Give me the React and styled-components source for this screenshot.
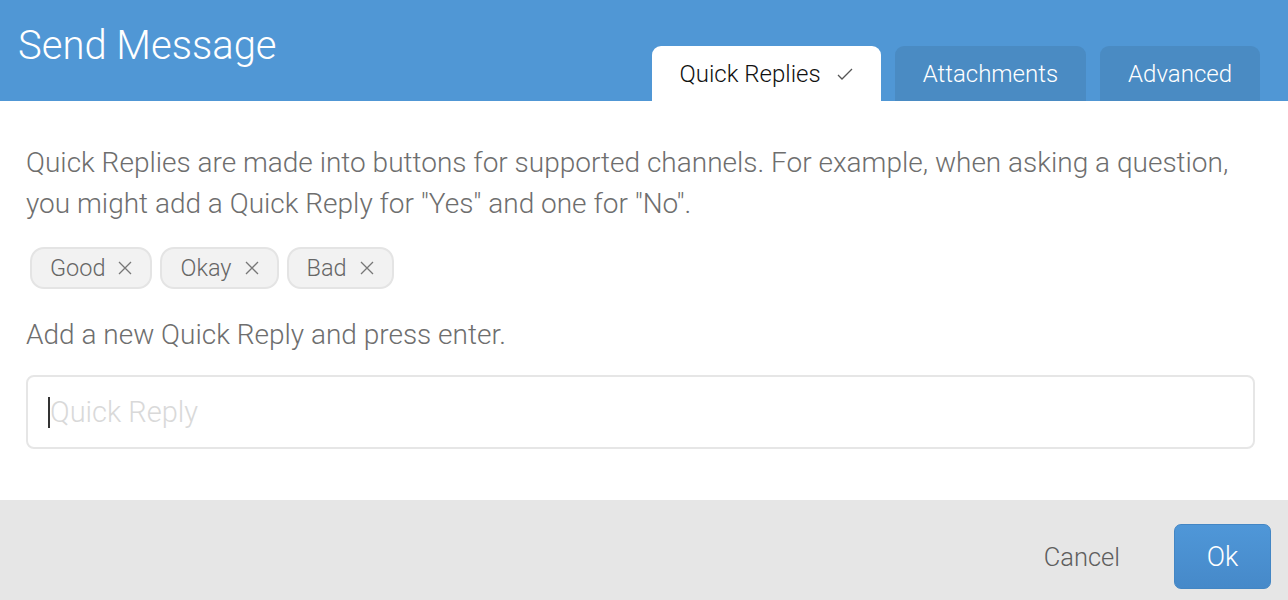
import React, { useState } from "react";
import styled, { createGlobalStyle } from "styled-components";

const GlobalStyle = createGlobalStyle`
  html, body {
    margin: 0;
    padding: 0;
    background: #fff;
    font-family: Roboto, "Liberation Sans", sans-serif;
  }
  * { box-sizing: border-box; }
`;

const Modal = styled.div`
  width: 1288px;
  height: 600px;
  display: flex;
  flex-direction: column;
  overflow: hidden;
`;

const Header = styled.div`
  height: 101px;
  background: #5097d5;
  display: flex;
  justify-content: space-between;
  align-items: flex-end;
  padding: 0 28px 0 18px;
`;

const Title = styled.h1`
  align-self: flex-start;
  margin: 23px 0 0;
  font-size: 40px;
  font-weight: 300;
  color: #fff;
  line-height: 46px;
`;

const Tabs = styled.div`
  display: flex;
  gap: 14px;
`;

const Tab = styled.div`
  height: 55px;
  display: flex;
  align-items: center;
  gap: 16px;
  padding: 1px 28px 0;
  border-radius: 9px 9px 0 0;
  font-size: 24px;
  font-weight: 300;
  background: ${(p) => (p.active ? "#fff" : "#4a8bc3")};
  color: ${(p) => (p.active ? "#111" : "#fff")};
  cursor: pointer;
`;

const Body = styled.div`
  flex: 1;
  padding: 41px 30px 0 26px;
`;

const Text = styled.p`
  margin: 0;
  font-size: 28px;
  font-weight: 300;
  line-height: 41px;
  color: #6e6e6e;
`;

const Chips = styled.div`
  display: flex;
  gap: 8px;
  margin: 23px 0 25px 4px;
`;

const Chip = styled.span`
  height: 42px;
  display: inline-flex;
  align-items: center;
  gap: 13px;
  padding: 0 18px;
  border: 2px solid #e4e4e4;
  border-radius: 14px;
  background: #f2f2f2;
  color: #666;
  font-size: 23.5px;
  font-weight: 300;
`;

const Field = styled.div`
  position: relative;
  margin-top: 20px;
`;

const Input = styled.input`
  display: block;
  width: 1229px;
  height: 74px;
  padding: 0 22px;
  border: 2px solid #e6e6e6;
  border-radius: 8px;
  font-family: Roboto, "Liberation Sans", sans-serif;
  font-size: 29px;
  font-weight: 300;
  color: #444;
  caret-color: transparent;
  outline: none;
  &::placeholder { color: #d9d9d9; }
`;

const Caret = styled.span`
  position: absolute;
  left: 22px;
  top: 22px;
  width: 2px;
  height: 31px;
  background: #333;
`;

const Footer = styled.div`
  height: 100px;
  background: #e6e6e6;
  display: flex;
  justify-content: flex-end;
  align-items: flex-start;
  padding: 24px 17px 0 0;
  gap: 54px;
`;

const Cancel = styled.button`
  height: 65px;
  border: none;
  background: none;
  padding: 0;
  font-family: inherit;
  font-size: 25.5px;
  font-weight: 300;
  color: #5e5e5e;
`;

const Ok = styled.button`
  width: 97px;
  height: 65px;
  border: 1px solid #4386c4;
  border-radius: 7px;
  background: linear-gradient(#4f97d8, #4689c9);
  font-family: inherit;
  font-size: 27px;
  font-weight: 300;
  color: #fff;
`;

const Check = () => (
  <svg width="16" height="14" viewBox="0 0 16 14">
    <path d="M1 8 L5 12 L15 2" fill="none" stroke="#555" strokeWidth="1.3" />
  </svg>
);

const Close = () => (
  <svg width="14" height="14" viewBox="0 0 14 14">
    <path d="M1 1 L13 13 M13 1 L1 13" fill="none" stroke="#777" strokeWidth="1.3" />
  </svg>
);

export default function App() {
  const [replies] = useState(["Good", "Okay", "Bad"]);
  return (
    <Modal>
      <GlobalStyle />
      <Header>
        <Title>Send Message</Title>
        <Tabs>
          <Tab active>
            Quick Replies <Check />
          </Tab>
          <Tab>Attachments</Tab>
          <Tab>Advanced</Tab>
        </Tabs>
      </Header>
      <Body>
        <Text>
          Quick Replies are made into buttons for supported channels. For example, when asking a question,
          you might add a Quick Reply for "Yes" and one for "No".
        </Text>
        <Chips>
          {replies.map((r) => (
            <Chip key={r}>
              {r} <Close />
            </Chip>
          ))}
        </Chips>
        <Text>Add a new Quick Reply and press enter.</Text>
        <Field>
          <Input placeholder="Quick Reply" />
          <Caret />
        </Field>
      </Body>
      <Footer>
        <Cancel>Cancel</Cancel>
        <Ok>Ok</Ok>
      </Footer>
    </Modal>
  );
}
